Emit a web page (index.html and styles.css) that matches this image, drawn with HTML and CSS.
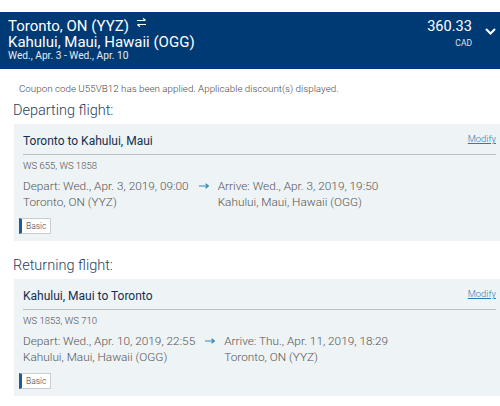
FILE: index.html
```html
<!DOCTYPE html>
<html>
<head>
<meta charset="utf-8">
<link rel="stylesheet" href="styles.css">
</head>
<body>
<header class="summary">
  <div class="route">
    <div class="city">Toronto, ON (YYZ)
      <svg class="swap" width="11" height="9" viewBox="0 0 11 9"><path d="M1 2.5H9.5M7 0.3L9.6 2.5M10 6.5H1.5M4 8.7L1.4 6.5" fill="none" stroke="#fff" stroke-width="1.2"/></svg>
    </div>
    <div class="city">Kahului, Maui, Hawaii (OGG)</div>
    <div class="dates">Wed., Apr. 3 - Wed., Apr. 10</div>
  </div>
  <div class="total">
    <div class="price">
      <div class="amount">360.33</div>
      <div class="currency">CAD</div>
    </div>
    <svg class="chev" width="11" height="7" viewBox="0 0 11 7"><path d="M1 1L5.5 5.5L10 1" fill="none" stroke="#fff" stroke-width="2"/></svg>
  </div>
</header>

<p class="coupon">Coupon code U55VB12 has been applied. Applicable discount(s) displayed.</p>

<h2 class="leg-title">Departing flight:</h2>
<section class="card">
  <div class="card-head">
    <span class="card-route">Toronto to Kahului, Maui</span>
    <a class="modify" href="#">Modify</a>
  </div>
  <div class="flights">WS 655, WS 1858</div>
  <div class="times">
    <div class="col">
      <div>Depart: Wed., Apr. 3, 2019, 09:00</div>
      <div>Toronto, ON (YYZ)</div>
    </div>
    <svg class="arrow" width="10" height="6" viewBox="0 0 10 6"><path d="M0 3H9M6.5 0.8L9.3 3L6.5 5.2" fill="none" stroke="#2f8ab5" stroke-width="1.2"/></svg>
    <div class="col">
      <div>Arrive: Wed., Apr. 3, 2019, 19:50</div>
      <div>Kahului, Maui, Hawaii (OGG)</div>
    </div>
  </div>
  <span class="badge">Basic</span>
</section>

<h2 class="leg-title second">Returning flight:</h2>
<section class="card">
  <div class="card-head">
    <span class="card-route">Kahului, Maui to Toronto</span>
    <a class="modify" href="#">Modify</a>
  </div>
  <div class="flights">WS 1853, WS 710</div>
  <div class="times">
    <div class="col">
      <div>Depart: Wed., Apr. 10, 2019, 22:55</div>
      <div>Kahului, Maui, Hawaii (OGG)</div>
    </div>
    <svg class="arrow" width="10" height="6" viewBox="0 0 10 6"><path d="M0 3H9M6.5 0.8L9.3 3L6.5 5.2" fill="none" stroke="#2f8ab5" stroke-width="1.2"/></svg>
    <div class="col">
      <div>Arrive: Thu., Apr. 11, 2019, 18:29</div>
      <div>Toronto, ON (YYZ)</div>
    </div>
  </div>
  <span class="badge">Basic</span>
</section>
</body>
</html>
```

FILE: styles.css
```css
* { box-sizing: border-box; }
body {
  margin: 0;
  background: #fff;
  font-family: Roboto, "Liberation Sans", sans-serif;
  color: #5e5e5e;
}
.summary {
  margin-top: 12px;
  height: 57px;
  background: #003a74;
  color: #fff;
  display: flex;
  justify-content: space-between;
  padding: 6px 4px 0 8px;
}
.city {
  font-size: 15px;
  line-height: 16px;
}
.swap { margin-left: 3px; vertical-align: 4px; }
.dates {
  font-size: 10.2px;
  line-height: 12px;
  color: #e6ecf3;
}
.total {
  display: flex;
  align-items: flex-start;
}
.price { text-align: right; }
.amount {
  font-size: 14.6px;
  line-height: 16px;
}
.currency {
  font-size: 8.5px;
  line-height: 10px;
  margin-top: 4px;
  color: #dde5ee;
}
.chev { margin: 10px 0 0 13px; }
.coupon {
  margin: 14px 0 0 19px;
  font-size: 9.8px;
  line-height: 12px;
  font-weight: 300;
  color: #4a4a4a;
}
.leg-title {
  margin: 6px 0 3px 13px;
  font-size: 14.5px;
  line-height: 20px;
  font-weight: 300;
  color: #1f3f60;
}
.leg-title.second { margin-top: 15px; }
.card {
  margin-left: 14px;
  background: #eef3f5;
  padding: 9px 4px 7px 9px;
}
.card-head {
  display: flex;
  justify-content: space-between;
  align-items: flex-start;
  padding-bottom: 5px;
  border-bottom: 1px solid #b9c0c3;
}
.card-route {
  font-size: 12px;
  line-height: 16px;
  font-weight: 400;
  color: #142f4f;
}
.modify {
  font-size: 9.4px;
  line-height: 12px;
  font-weight: 300;
  color: #2a7cb8;
  text-decoration: underline;
}
.flights {
  margin-top: 5px;
  font-size: 9.5px;
  line-height: 12px;
  font-weight: 300;
  color: #4a4a4a;
}
.times {
  display: flex;
  align-items: flex-start;
  margin-top: 6px;
  font-size: 11.8px;
  line-height: 16px;
  font-weight: 300;
  color: #555;
}
.arrow { margin: 5px 9px 0 10px; flex: none; }
.badge {
  display: inline-block;
  margin: 8px 0 0 -4px;
  height: 16px;
  padding: 0 4px;
  font-size: 8.5px;
  line-height: 14px;
  font-weight: 300;
  color: #444;
  background: #fff;
  border: 1px solid #c9cdcf;
  border-left: 3px solid #1b5c9c;
}
```
